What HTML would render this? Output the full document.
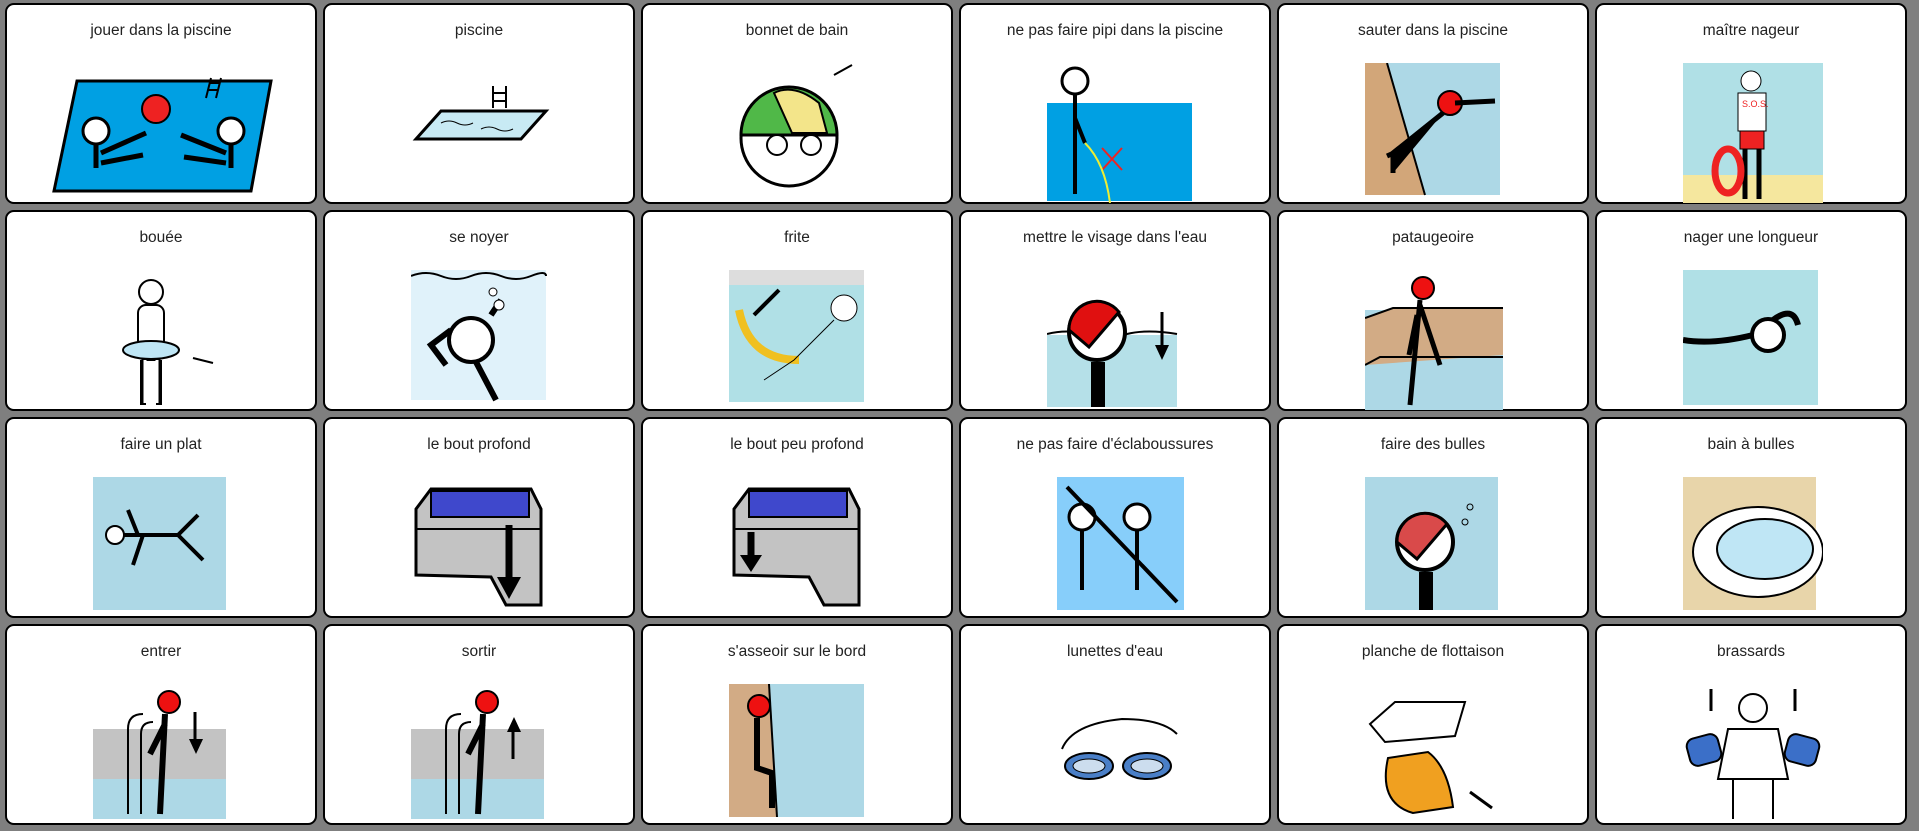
<!DOCTYPE html>
<html><head><meta charset="utf-8"><style>
body{margin:0;width:1919px;height:831px;background:#7f7f7f;position:relative;overflow:hidden;font-family:"Liberation Sans",Arial,sans-serif}
.c{position:absolute;width:308px;height:197px;background:#fff;border:2px solid #000;border-radius:9px;box-sizing:content-box}
.t{position:absolute;top:17px;left:0;right:0;text-align:center;font-size:15.5px;color:#222}
.c svg{position:absolute;left:86px;top:58px}
</style></head><body>
<div class="c" style="left:5px;top:3px"><div class="t">jouer dans la piscine</div>
<svg style="left:44px;top:68px" width="225" height="125" viewBox="0 0 225 125"><polygon points="26,8 220,8 200,118 3,118" fill="#00a0e3" stroke="#000" stroke-width="3"/><circle cx="105" cy="36" r="14" fill="#e22" stroke="#000" stroke-width="2"/><circle cx="45" cy="58" r="13" fill="#fff" stroke="#000" stroke-width="3"/><circle cx="180" cy="58" r="13" fill="#fff" stroke="#000" stroke-width="3"/><path d="M45 70v25M50 80l45-20M50 90l42-8M180 70v25M175 80l-45-18M175 90l-42-6" stroke="#000" stroke-width="5"/><path d="M160 5l-5 20M170 5l-5 20M159 10h10M157 17h10" stroke="#000" stroke-width="2"/></svg></div>
<div class="c" style="left:323px;top:3px"><div class="t">piscine</div>
<svg width="140" height="135" viewBox="0 0 140 135"><polygon points="30,48 135,48 110,76 5,76" fill="#c8eaf4" stroke="#000" stroke-width="3"/><path d="M82 45v-22M95 45v-22M82 30h13M82 38h13" stroke="#000" stroke-width="2"/><path d="M30 60q8-4 16 0t16 0M70 66q8-4 16 0t16 0" stroke="#000" fill="none"/></svg></div>
<div class="c" style="left:641px;top:3px"><div class="t">bonnet de bain</div>
<svg width="140" height="135" viewBox="0 0 140 135"><circle cx="60" cy="75" r="48" fill="#fff" stroke="#000" stroke-width="3"/><path d="M12 72a48 48 0 0 1 96 0z" fill="#50b848" stroke="#000" stroke-width="3"/><path d="M45 30q20-10 45 10l8 30h-35z" fill="#f3e58a" stroke="#000" stroke-width="2"/><circle cx="48" cy="82" r="10" fill="#fff" stroke="#000" stroke-width="2"/><circle cx="82" cy="82" r="10" fill="#fff" stroke="#000" stroke-width="2"/><path d="M105 12l18-10" stroke="#000" stroke-width="2"/></svg></div>
<div class="c" style="left:959px;top:3px"><div class="t">ne pas faire pipi dans la piscine</div>
<svg width="145" height="140" viewBox="0 0 145 140"><rect x="0" y="40" width="145" height="98" fill="#00a0e3"/><circle cx="28" cy="18" r="13" fill="#fff" stroke="#000" stroke-width="3"/><path d="M28 31v100M28 55l10 25" stroke="#000" stroke-width="4"/><path d="M55 85l20 22M75 85l-20 22" stroke="#e22" stroke-width="2"/><path d="M38 80q20 20 25 60" stroke="#ee3" fill="none" stroke-width="2"/></svg></div>
<div class="c" style="left:1277px;top:3px"><div class="t">sauter dans la piscine</div>
<svg width="140" height="135" viewBox="0 0 140 135"><rect x="0" y="0" width="135" height="132" fill="#add8e6"/><polygon points="0,0 22,0 60,132 0,132" fill="#d2a679"/><path d="M22 0l38 132" stroke="#000" stroke-width="2"/><circle cx="85" cy="40" r="12" fill="#e11" stroke="#000" stroke-width="2"/><path d="M78 50l-50 40v20M40 85l-18 8M90 40l40-2" stroke="#000" stroke-width="5"/></svg></div>
<div class="c" style="left:1595px;top:3px"><div class="t">maître nageur</div>
<svg width="140" height="140" viewBox="0 0 140 140"><rect x="0" y="0" width="140" height="140" fill="#b0e0e6"/><rect x="0" y="112" width="140" height="28" fill="#f5e79e"/><circle cx="68" cy="18" r="10" fill="#fff" stroke="#000"/><rect x="55" y="30" width="28" height="38" fill="#fff" stroke="#000"/><rect x="57" y="68" width="24" height="18" fill="#e22" stroke="#000"/><path d="M62 86v50M76 86v50" stroke="#000" stroke-width="5"/><ellipse cx="45" cy="108" rx="13" ry="22" fill="none" stroke="#e22" stroke-width="7"/><text x="59" y="44" font-size="9" fill="#e22">S.O.S.</text></svg></div>
<div class="c" style="left:5px;top:210px"><div class="t">bouée</div>
<svg width="140" height="140" viewBox="0 0 140 140"><circle cx="58" cy="22" r="12" fill="#fff" stroke="#000" stroke-width="2"/><rect x="45" y="35" width="26" height="55" rx="8" fill="#fff" stroke="#000" stroke-width="2"/><path d="M50 90v45M66 90v45" stroke="#000" stroke-width="6"/><path d="M52 90v43M64 90v43" stroke="#fff" stroke-width="3"/><ellipse cx="58" cy="80" rx="28" ry="9" fill="#bfe6f5" stroke="#000" stroke-width="2"/><path d="M100 88l20 5" stroke="#000" stroke-width="2"/></svg></div>
<div class="c" style="left:323px;top:210px"><div class="t">se noyer</div>
<svg width="140" height="135" viewBox="0 0 140 135"><rect x="0" y="0" width="135" height="130" fill="#e0f2fa"/><path d="M0 6q15-6 30 0t30 0t30 0t30 0t15 0" stroke="#000" fill="none" stroke-width="2"/><circle cx="60" cy="70" r="22" fill="#fff" stroke="#000" stroke-width="4"/><path d="M65 92l20 38M40 60l-20 15l15 20M80 45l10-15" stroke="#000" stroke-width="6" fill="none"/><circle cx="88" cy="35" r="5" fill="#fff" stroke="#000"/><circle cx="82" cy="22" r="4" fill="#fff" stroke="#000"/></svg></div>
<div class="c" style="left:641px;top:210px"><div class="t">frite</div>
<svg width="140" height="135" viewBox="0 0 140 135"><rect x="0" y="0" width="135" height="132" fill="#b0e0e6"/><rect x="0" y="0" width="135" height="15" fill="#ddd"/><path d="M10 40q10 50 60 50" stroke="#f0c020" stroke-width="8" fill="none"/><circle cx="115" cy="38" r="13" fill="#fff" stroke="#000"/><path d="M50 20l-25 25" stroke="#000" stroke-width="4"/><path d="M105 50l-40 40l-30 20" stroke="#000" fill="none"/></svg></div>
<div class="c" style="left:959px;top:210px"><div class="t">mettre le visage dans l'eau</div>
<svg width="140" height="140" viewBox="0 0 140 140"><rect x="0" y="65" width="130" height="72" fill="#b5e0e8"/><path d="M0 64q20-5 40 0t40 0t50 0" stroke="#000" stroke-width="2" fill="none"/><circle cx="50" cy="62" r="28" fill="#fff" stroke="#000" stroke-width="4"/><path d="M22 60a28 28 0 0 1 50-18l-30 35z" fill="#e01010" stroke="#000" stroke-width="3"/><rect x="44" y="92" width="14" height="45" fill="#000"/><path d="M115 42v38" stroke="#000" stroke-width="3"/><polygon points="108,75 122,75 115,90" fill="#000"/></svg></div>
<div class="c" style="left:1277px;top:210px"><div class="t">pataugeoire</div>
<svg width="140" height="140" viewBox="0 0 140 140"><rect x="0" y="40" width="138" height="100" fill="#add8e6"/><polygon points="0,48 28,38 138,38 138,85 0,95" fill="#d2ab85"/><path d="M0 48l28-10h110M0 95l15-8h123" stroke="#000" stroke-width="2" fill="none"/><circle cx="58" cy="18" r="11" fill="#e11" stroke="#000" stroke-width="2"/><path d="M55 30l-10 105M55 35l20 60M52 45l-8 40" stroke="#000" stroke-width="5"/></svg></div>
<div class="c" style="left:1595px;top:210px"><div class="t">nager une longueur</div>
<svg width="140" height="140" viewBox="0 0 140 140"><rect x="0" y="0" width="135" height="135" fill="#b0e0e6"/><circle cx="85" cy="65" r="16" fill="#fff" stroke="#000" stroke-width="4"/><path d="M0 70q30 5 70-5M90 50q20-15 25 5" stroke="#000" stroke-width="6" fill="none"/></svg></div>
<div class="c" style="left:5px;top:417px"><div class="t">faire un plat</div>
<svg width="140" height="140" viewBox="0 0 140 140"><rect x="0" y="0" width="133" height="133" fill="#add8e6"/><circle cx="22" cy="58" r="9" fill="#fff" stroke="#000" stroke-width="2"/><path d="M30 58h55l20-20M85 58l25 25M45 58l-10-25M50 58l-10 30" stroke="#000" stroke-width="4" fill="none"/></svg></div>
<div class="c" style="left:323px;top:417px"><div class="t">le bout profond</div>
<svg width="140" height="140" viewBox="0 0 140 140"><polygon points="5,32 20,12 120,12 130,32 130,128 95,128 80,100 5,98" fill="#c3c3c3" stroke="#000" stroke-width="3"/><polygon points="20,14 118,14 118,40 20,40" fill="#3f48cc" stroke="#000" stroke-width="2"/><path d="M98 48v55" stroke="#000" stroke-width="7"/><polygon points="86,100 110,100 98,122" fill="#000"/><path d="M5 52h125" stroke="#000" stroke-width="2"/></svg></div>
<div class="c" style="left:641px;top:417px"><div class="t">le bout peu profond</div>
<svg width="140" height="140" viewBox="0 0 140 140"><polygon points="5,32 20,12 120,12 130,32 130,128 95,128 80,100 5,98" fill="#c3c3c3" stroke="#000" stroke-width="3"/><polygon points="20,14 118,14 118,40 20,40" fill="#3f48cc" stroke="#000" stroke-width="2"/><path d="M22 55v25" stroke="#000" stroke-width="7"/><polygon points="11,78 33,78 22,95" fill="#000"/><path d="M5 52h125" stroke="#000" stroke-width="2"/></svg></div>
<div class="c" style="left:959px;top:417px"><div class="t">ne pas faire d'éclaboussures</div>
<svg width="140" height="140" viewBox="0 0 140 140"><rect x="10" y="0" width="127" height="133" fill="#87cefa"/><circle cx="35" cy="40" r="13" fill="#fff" stroke="#000" stroke-width="3"/><circle cx="90" cy="40" r="13" fill="#fff" stroke="#000" stroke-width="3"/><path d="M35 53v60M90 53v60M20 10l110 115" stroke="#000" stroke-width="4"/></svg></div>
<div class="c" style="left:1277px;top:417px"><div class="t">faire des bulles</div>
<svg width="140" height="140" viewBox="0 0 140 140"><rect x="0" y="0" width="133" height="133" fill="#add8e6"/><circle cx="60" cy="65" r="28" fill="#fff" stroke="#000" stroke-width="4"/><path d="M32 65a28 28 0 0 1 50-18l-30 35z" fill="#d94a4a" stroke="#000" stroke-width="3"/><rect x="54" y="95" width="14" height="38" fill="#000"/><circle cx="105" cy="30" r="3" fill="none" stroke="#000"/><circle cx="100" cy="45" r="3" fill="none" stroke="#000"/></svg></div>
<div class="c" style="left:1595px;top:417px"><div class="t">bain à bulles</div>
<svg width="140" height="140" viewBox="0 0 140 140"><rect x="0" y="0" width="133" height="133" fill="#e8d5aa"/><ellipse cx="75" cy="75" rx="65" ry="45" fill="#fff" stroke="#000" stroke-width="2"/><ellipse cx="82" cy="72" rx="48" ry="30" fill="#bfe6f5" stroke="#000" stroke-width="2"/></svg></div>
<div class="c" style="left:5px;top:624px"><div class="t">entrer</div>
<svg width="140" height="140" viewBox="0 0 140 140"><rect x="0" y="45" width="133" height="90" fill="#c3c3c3"/><rect x="0" y="95" width="133" height="40" fill="#add8e6"/><path d="M35 130v-85q0-15 15-15M48 130v-80q0-12 12-12" stroke="#000" stroke-width="2" fill="none"/><circle cx="76" cy="18" r="11" fill="#e11" stroke="#000" stroke-width="2"/><path d="M72 30l-5 100M72 40l-15 30" stroke="#000" stroke-width="6"/><path d="M102 28v30" stroke="#000" stroke-width="3"/><polygon points="96,55 110,55 103,70" fill="#000"/></svg></div>
<div class="c" style="left:323px;top:624px"><div class="t">sortir</div>
<svg width="140" height="140" viewBox="0 0 140 140"><rect x="0" y="45" width="133" height="90" fill="#c3c3c3"/><rect x="0" y="95" width="133" height="40" fill="#add8e6"/><path d="M35 130v-85q0-15 15-15M48 130v-80q0-12 12-12" stroke="#000" stroke-width="2" fill="none"/><circle cx="76" cy="18" r="11" fill="#e11" stroke="#000" stroke-width="2"/><path d="M72 30l-5 100M72 40l-15 30" stroke="#000" stroke-width="6"/><path d="M102 45v30" stroke="#000" stroke-width="3"/><polygon points="96,48 110,48 103,33" fill="#000"/></svg></div>
<div class="c" style="left:641px;top:624px"><div class="t">s'asseoir sur le bord</div>
<svg width="140" height="140" viewBox="0 0 140 140"><rect x="0" y="0" width="135" height="133" fill="#add8e6"/><polygon points="0,0 40,0 48,133 0,133" fill="#d2ab85"/><path d="M40 0l8 133" stroke="#000" stroke-width="2"/><circle cx="30" cy="22" r="11" fill="#e11" stroke="#000" stroke-width="2"/><path d="M28 34v50l15 5v35" stroke="#000" stroke-width="6" fill="none"/></svg></div>
<div class="c" style="left:959px;top:624px"><div class="t">lunettes d'eau</div>
<svg width="140" height="140" viewBox="0 0 140 140"><path d="M15 65q10-25 60-30q40 0 55 15" stroke="#000" stroke-width="2" fill="none"/><ellipse cx="42" cy="82" rx="24" ry="13" fill="#4a7fc7" stroke="#000" stroke-width="2"/><ellipse cx="100" cy="82" rx="24" ry="13" fill="#4a7fc7" stroke="#000" stroke-width="2"/><ellipse cx="42" cy="82" rx="16" ry="7" fill="#cde" stroke="#000"/><ellipse cx="100" cy="82" rx="16" ry="7" fill="#cde" stroke="#000"/></svg></div>
<div class="c" style="left:1277px;top:624px"><div class="t">planche de flottaison</div>
<svg width="140" height="140" viewBox="0 0 140 140"><polygon points="5,40 30,18 100,18 90,52 20,58" fill="#fff" stroke="#000" stroke-width="2"/><path d="M23 74q-10 45 25 55l40-6q-5-40-25-55z" fill="#f0a020" stroke="#000" stroke-width="2"/><path d="M105 108l22 16" stroke="#000" stroke-width="3"/></svg></div>
<div class="c" style="left:1595px;top:624px"><div class="t">brassards</div>
<svg width="140" height="140" viewBox="0 0 140 140"><circle cx="70" cy="24" r="14" fill="#fff" stroke="#000" stroke-width="2"/><path d="M45 45h50l10 50h-70z" fill="#fff" stroke="#000" stroke-width="2"/><path d="M50 95v40M90 95v40" stroke="#000" stroke-width="2"/><rect x="5" y="52" width="32" height="28" rx="8" fill="#3b6fc8" stroke="#000" stroke-width="2" transform="rotate(-15 21 66)"/><rect x="103" y="52" width="32" height="28" rx="8" fill="#3b6fc8" stroke="#000" stroke-width="2" transform="rotate(15 119 66)"/><path d="M28 5v22M112 5v22" stroke="#000" stroke-width="3"/></svg></div>
</body></html>
